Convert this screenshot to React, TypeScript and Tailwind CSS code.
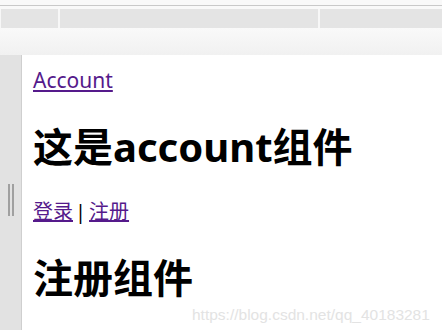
export default function App() {
  return (
    <div className="relative flex h-[330px] w-[442px] flex-col overflow-hidden bg-white font-['Noto_Sans','Noto_Sans_CJK_SC',sans-serif]">
      {/* browser chrome */}
      <div className="h-[5px] bg-[#f9f9f9]" />
      <div className="h-px bg-[#c9c9c9]" />
      <div className="h-[3px] bg-[#f9f9f9]" />
      <div className="flex h-[19px] gap-[2px] bg-[#f7f7f7] pl-px">
        <div className="w-[57px] bg-[#e4e4e4]" />
        <div className="w-[258px] bg-[#e4e4e4]" />
        <div className="flex-1 bg-[#e4e4e4]" />
      </div>
      <div className="h-[27px] bg-gradient-to-b from-[#f9f9f9] to-[#f1f1f1]" />

      <div className="flex flex-1">
        {/* side panel */}
        <div className="flex w-[22px] items-center justify-center gap-[2px] border-r border-[#cfcfcf] bg-[#e2e2e2] pt-[14px]">
          <div className="h-[32px] w-[2px] bg-[#a0a0a0]" />
          <div className="h-[32px] w-[2px] bg-[#a0a0a0]" />
        </div>

        {/* page */}
        <div className="flex-1 pl-[11px] text-[20px] text-black">
          <div className="mt-[11px] leading-[28px]">
            <a href="#" className="text-[21px] text-[#551a8b] underline">Account</a>
          </div>
          <h1 className="mt-[28px] text-[40px] font-bold leading-[48px]">这是account组件</h1>
          <div className="mt-[27px] flex leading-[28px]">
            <a href="#" className="text-[#551a8b] underline">登录</a>
            <span className="ml-[2px] mr-[3px]">|</span>
            <a href="#" className="text-[#551a8b] underline">注册</a>
          </div>
          <h1 className="mt-[28px] text-[40px] font-bold leading-[48px]">注册组件</h1>
        </div>
      </div>

      {/* watermark */}
      <div className="absolute left-[192px] top-[303px] font-['Liberation_Sans',sans-serif] text-[15.5px] text-[#e3e3e3]">
        https://blog.csdn.net/qq_40183281
      </div>
    </div>
  );
}
